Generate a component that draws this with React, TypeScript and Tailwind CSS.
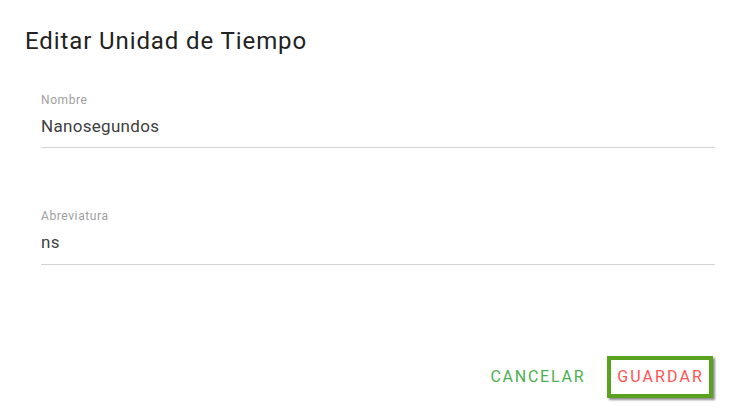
import React from "react";

export default function App() {
  return (
    <div className="w-[754px] h-[418px] bg-white overflow-hidden" style={{ fontFamily: "Roboto, 'Liberation Sans', sans-serif" }}>
      <div className="pl-[25px] pr-[23px] pt-[26px]">
        <h1 className="text-[24px] leading-[30px] tracking-[0.9px] text-[#222222] font-normal">Editar Unidad de Tiempo</h1>
        <div className="px-[16px] pt-[37px]">
          <div className="border-b border-[#d3d3d3] pb-[10px]">
            <div className="text-[12px] leading-[14px] tracking-[0.6px] text-[#9e9e9e]">Nombre</div>
            <div className="text-[17px] leading-[22px] tracking-[0.3px] mt-[8px] text-[#404040]">Nanosegundos</div>
          </div>
          <div className="border-b border-[#d3d3d3] pb-[11px] mt-[61px]">
            <div className="text-[12px] leading-[14px] tracking-[0.6px] text-[#9e9e9e]">Abreviatura</div>
            <div className="text-[17px] leading-[22px] tracking-[0.3px] mt-[8px] text-[#404040]">ns</div>
          </div>
        </div>
      </div>
      <div className="flex justify-end items-center pr-[41px] mt-[91px] gap-[22px]">
        <button className="text-[16px] tracking-[1.75px] text-[#4caf50] h-[42px]">CANCELAR</button>
        <button className="text-[16px] tracking-[2.1px] text-[#ff5252] h-[42px] pl-[6px] pr-[5px] border-[4px] border-[#5aa21e] shadow-[2px_2px_2px_rgba(0,0,0,0.45)]">GUARDAR</button>
      </div>
    </div>
  );
}
